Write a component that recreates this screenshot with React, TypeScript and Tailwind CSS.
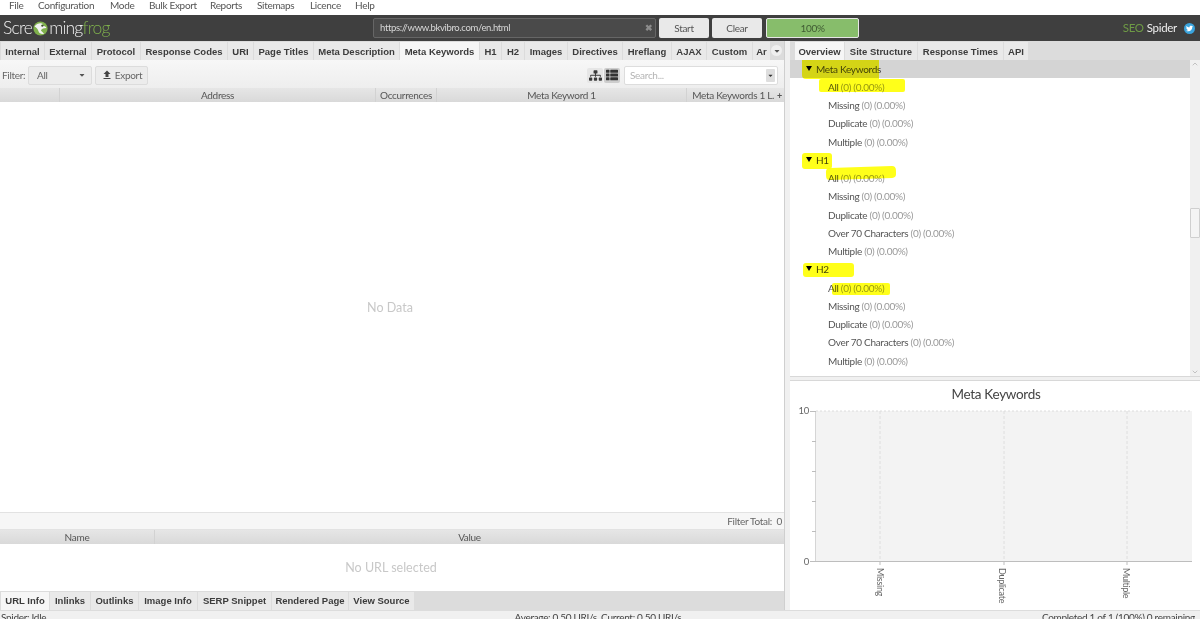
import { FaSitemap, FaThList, FaTwitter, FaCaretDown } from 'react-icons/fa';
import { MdFileUpload } from 'react-icons/md';
import { ChevronUp, ChevronDown } from 'lucide-react';

const menuItems = [
  { label: 'File', w: 'w-[29px]' },
  { label: 'Configuration', w: 'w-[72px]' },
  { label: 'Mode', w: 'w-[39px]' },
  { label: 'Bulk Export', w: 'w-[61px]' },
  { label: 'Reports', w: 'w-[47px]' },
  { label: 'Sitemaps', w: 'w-[53px]' },
  { label: 'Licence', w: 'w-[45px]' },
  { label: 'Help', w: 'w-[30px]' },
];

const mainTabs = [
  { label: 'Internal', w: 'w-[43px]' },
  { label: 'External', w: 'w-[46px]' },
  { label: 'Protocol', w: 'w-[48px]' },
  { label: 'Response Codes', w: 'w-[86px]' },
  { label: 'URI', w: 'w-[25px]' },
  { label: 'Page Titles', w: 'w-[59px]' },
  { label: 'Meta Description', w: 'w-[85px]' },
  { label: 'Meta Keywords', w: 'w-[79px]', active: true },
  { label: 'H1', w: 'w-[21px]' },
  { label: 'H2', w: 'w-[22px]' },
  { label: 'Images', w: 'w-[42px]' },
  { label: 'Directives', w: 'w-[54px]' },
  { label: 'Hreflang', w: 'w-[48px]' },
  { label: 'AJAX', w: 'w-[34px]' },
  { label: 'Custom', w: 'w-[45px]' },
];

const rightTabs = [
  { label: 'Overview', w: 'w-[49px]', active: true },
  { label: 'Site Structure', w: 'w-[72px]' },
  { label: 'Response Times', w: 'w-[85px]' },
  { label: 'API', w: 'w-[24px]' },
];

const bottomTabs = [
  { label: 'URL Info', w: 'w-[48px]', active: true },
  { label: 'Inlinks', w: 'w-[40px]' },
  { label: 'Outlinks', w: 'w-[47px]' },
  { label: 'Image Info', w: 'w-[58px]' },
  { label: 'SERP Snippet', w: 'w-[73px]' },
  { label: 'Rendered Page', w: 'w-[76px]' },
  { label: 'View Source', w: 'w-[65px]' },
];

const tree = [
  { group: 'Meta Keywords', selected: true, rows: ['All', 'Missing', 'Duplicate', 'Multiple'] },
  { group: 'H1', rows: ['All', 'Missing', 'Duplicate', 'Over 70 Characters', 'Multiple'] },
  { group: 'H2', rows: ['All', 'Missing', 'Duplicate', 'Over 70 Characters', 'Multiple'] },
];

type Tab = { label: string; w: string; active?: boolean };

const TabStrip = ({ tabs, inset = 'pl-px', bottom = false }: { tabs: Tab[]; inset?: string; bottom?: boolean }) => (
  <div className={`flex h-full gap-px ${inset} ${bottom ? 'items-start pt-px' : 'items-end'}`}>
    {tabs.map((t) => (
      <div
        key={t.label}
        className={`flex h-[18px] shrink-0 items-center justify-center whitespace-nowrap font-['Liberation_Sans',sans-serif] text-[9.5px] font-bold tracking-normal text-[#3c3c3c] ${t.w} ${
          bottom ? '' : 'pt-[2px]'
        } ${t.active ? 'bg-[#f6f6f6]' : 'bg-[#e9e9e9]'}`}
      >
        {t.label}
      </div>
    ))}
  </div>
);

const HeaderCell = ({ label, w }: { label: string; w: string }) => (
  <div className={`flex h-full shrink-0 items-center justify-center border-r border-[#d2d2d2] pt-[1px] text-[#555] ${w}`}>
    {label}
  </div>
);

const FrogMark = () => (
  <svg width="15" height="15" viewBox="0 0 19 19" className="mx-px shrink-0">
    <circle cx="9.5" cy="9.5" r="9" fill="#7fb04c" />
    <path d="M2 7c3-4 8-5 11-3-2 0-3 1-3 3 2-1 6-1 7 2-3 0-6 1-7 3 1 1 3 3 4 4-3 1-6 0-7-3-1-3-3-5-5-6z" fill="#f2f2f2" />
    <circle cx="12" cy="6" r="1.2" fill="#3f3f3f" />
  </svg>
);

const Chart = () => (
  <svg width="410" height="229" viewBox="0 0 410 229" className="block">
    <text x="206" y="18" textAnchor="middle" fontSize="13.5" fill="#444" fontFamily="Lato, sans-serif">
      Meta Keywords
    </text>
    <rect x="26" y="30" width="376" height="150" fill="#f3f3f3" />
    <line x1="26" y1="30" x2="402" y2="30" stroke="#dcdcdc" strokeDasharray="2 2" />
    {[90, 214, 337].map((x) => (
      <line key={x} x1={x} y1="30" x2={x} y2="180" stroke="#dedede" strokeDasharray="3 2" />
    ))}
    <line x1="20" y1="180.5" x2="402" y2="180.5" stroke="#bdbdbd" />
    <line x1="25.5" y1="30" x2="25.5" y2="180" stroke="#d5d5d5" />
    {[30, 60, 90, 120, 150].map((y) => (
      <line key={y} x1={y === 30 ? 20 : 22} y1={y + 0.5} x2="26" y2={y + 0.5} stroke="#bdbdbd" />
    ))}
    {[90, 214, 337].map((x) => (
      <line key={x} x1={x} y1="180" x2={x} y2="184" stroke="#bdbdbd" />
    ))}
    <text x="19" y="33" textAnchor="end" fontSize="9.5" fill="#666" fontFamily="Lato, sans-serif">10</text>
    <text x="19" y="184" textAnchor="end" fontSize="9.5" fill="#666" fontFamily="Lato, sans-serif">0</text>
    {[
      { x: 90, label: 'Missing' },
      { x: 212, label: 'Duplicate' },
      { x: 336, label: 'Multiple' },
    ].map((t) => (
      <text
        key={t.label}
        x="0"
        y="0"
        transform={`translate(${t.x - 3} 187) rotate(90)`}
        fontSize="9"
        fill="#666"
        fontFamily="Lato, sans-serif"
      >
        {t.label}
      </text>
    ))}
  </svg>
);

export default function App() {
  return (
    <div className="flex h-[619px] w-[1200px] flex-col overflow-hidden bg-white font-['Lato',sans-serif] text-[10px] tracking-[-0.3px] text-[#444]">
      {/* menu */}
      <div className="flex h-[15px] shrink-0 items-center pb-[4px] pl-[9px] text-[#555]">
        {menuItems.map((m) => (
          <div key={m.label} className={`whitespace-nowrap ${m.w}`}>
            {m.label}
          </div>
        ))}
      </div>

      {/* dark toolbar */}
      <div className="relative flex h-[26px] shrink-0 items-center bg-[#3f3f3f] pl-[3px]">
        <div className="flex w-[370px] items-center text-[17.5px] font-light tracking-[-0.8px] text-[#f0f0f0]">
          <span>Scre</span>
          <FrogMark />
          <span>ming</span>
          <span className="text-[#7fb04c]">frog</span>
        </div>
        <div className="flex h-[20px] w-[283px] items-center justify-between rounded-[2px] border border-[#666] bg-[#4a4a4a] pl-[6px] pr-[2px] text-[9.5px] tracking-[-0.35px] text-[#d8d8d8]">
          <span>https://www.bkvibro.com/en.html</span>
          <span className="text-[9px] font-bold text-[#8d8d8d]">✖</span>
        </div>
        <div className="ml-[3px] flex h-[20px] w-[50px] items-center justify-center rounded-[2px] bg-[#e9e9e9] text-[#555]">
          Start
        </div>
        <div className="ml-[3px] flex h-[20px] w-[50px] items-center justify-center rounded-[2px] bg-[#e9e9e9] text-[#555]">
          Clear
        </div>
        <div className="ml-[4px] flex h-[20px] w-[93px] items-center justify-center rounded-[2px] border border-[#e6e6e6] bg-[#87bd6b] text-[#3f5a33]">
          100%
        </div>
        <div className="ml-auto flex items-center pr-[5px] text-[11.5px]">
          <span className="text-[#6e9a45]">SEO</span>
          <span className="ml-[3px] text-[#eeeeee]">Spider</span>
          <span className="ml-[7px] flex h-[11px] w-[11px] items-center justify-center rounded-full bg-[#3aa3dc] text-white">
            <FaTwitter size={7} />
          </span>
        </div>
      </div>

      {/* panes */}
      <div className="flex min-h-0 flex-1">
        {/* left pane */}
        <div className="flex w-[785px] shrink-0 flex-col border-r border-[#cfcfcf]">
          <div className="flex h-[19px] shrink-0 items-center justify-between bg-[#dcdcdc]">
            <TabStrip tabs={mainTabs} />
            <div className="flex h-full items-center pr-[2px]">
              <span className="flex h-[18px] w-[17px] items-center justify-center self-end bg-[#e9e9e9] pt-[2px] font-['Liberation_Sans',sans-serif] text-[9.5px] font-bold tracking-normal text-[#3c3c3c]">
                Ar
              </span>
              <span className="ml-[1px] flex h-[11px] w-[11px] items-center justify-center rounded-full bg-[#efefef] text-[#555]">
                <FaCaretDown size={8} />
              </span>
            </div>
          </div>

          <div className="flex h-[28px] shrink-0 items-center bg-gradient-to-b from-[#f7f7f7] to-[#eeeeee] pl-[2px] pr-[6px] pt-[2px] text-[#666]">
            <span className="w-[26px]">Filter:</span>
            <div className="flex h-[19px] w-[64px] items-center justify-between rounded-[2px] border border-[#dcdcdc] bg-[#ececec] pl-[8px] pr-[5px]">
              <span>All</span>
              <FaCaretDown size={8} className="text-[#555]" />
            </div>
            <div className="ml-[3px] flex h-[19px] w-[53px] items-center justify-center gap-[2px] rounded-[2px] border border-[#dcdcdc] bg-[#ececec]">
              <MdFileUpload size={12} className="text-[#444]" />
              <span>Export</span>
            </div>
            <div className="ml-auto flex items-center">
              <div className="flex h-[15px] w-[16px] items-center justify-center rounded-[2px] bg-[#e6e6e6]">
                <FaSitemap size={13} className="text-[#3a3a3a]" />
              </div>
              <div className="ml-px flex h-[15px] w-[16px] items-center justify-center rounded-[2px] bg-[#cdcdcd]">
                <FaThList size={12} className="text-[#333]" />
              </div>
              <div className="ml-[4px] flex h-[19px] w-[154px] items-center justify-between rounded-[2px] border border-[#dddddd] bg-white pl-[5px] pr-[2px]">
                <span className="text-[#b4b4b4]">Search...</span>
                <span className="flex h-[13px] w-[9px] items-center justify-center rounded-[1px] bg-[#dedede] text-[#333]">
                  <FaCaretDown size={7} />
                </span>
              </div>
            </div>
          </div>

          <div className="flex h-[14px] shrink-0 bg-gradient-to-b from-[#e6e6e6] to-[#d9d9d9]">
            <HeaderCell label="" w="w-[60px]" />
            <HeaderCell label="Address" w="w-[316px]" />
            <HeaderCell label="Occurrences" w="w-[61px]" />
            <HeaderCell label="Meta Keyword 1" w="w-[250px]" />
            <div className="flex h-full flex-1 items-center justify-end pr-[2px] pt-[1px] text-[#555]">
              <span className="whitespace-nowrap">Meta Keywords 1 L.</span>
              <span className="ml-[3px] text-[9px] font-bold">+</span>
            </div>
          </div>

          <div className="flex min-h-0 flex-1 items-center justify-center pr-[4px] pt-[2px] text-[12.5px] tracking-normal text-[#c8c8c8]">
            No Data
          </div>

          <div className="flex h-[18px] shrink-0 items-center justify-end border-y border-[#e2e2e2] bg-[#f6f6f6] pr-[2px] text-[#666]">
            Filter Total:&nbsp;&nbsp;0
          </div>

          <div className="flex h-[14px] shrink-0 bg-gradient-to-b from-[#e6e6e6] to-[#d9d9d9]">
            <HeaderCell label="Name" w="w-[155px]" />
            <div className="flex h-full flex-1 items-center justify-center pt-[1px] text-[#555]">Value</div>
          </div>

          <div className="flex h-[47px] shrink-0 items-center justify-center pr-[2px] pt-[2px] text-[12.5px] tracking-normal text-[#c8c8c8]">
            No URL selected
          </div>

          <div className="h-[19px] shrink-0 bg-[#dcdcdc]">
            <TabStrip tabs={bottomTabs} bottom />
          </div>
        </div>

        {/* splitter */}
        <div className="w-[5px] shrink-0 bg-[#f0f0f0]" />

        {/* right pane */}
        <div className="flex min-w-0 flex-1 flex-col">
          <div className="h-[19px] shrink-0 bg-[#dcdcdc]">
            <TabStrip tabs={rightTabs} inset="pl-[5px]" />
          </div>

          <div className="flex h-[316px] shrink-0">
            <div className="relative min-w-0 flex-1 overflow-hidden">
              {tree.map((section) => (
                <div key={section.group}>
                  <div
                    className={`flex h-[18.25px] items-center pl-[16px] text-[#444] ${
                      section.selected ? 'bg-[#d4d4d4]' : ''
                    }`}
                  >
                    <span className="mb-[2px] mr-[4px] h-0 w-0 border-x-[3.5px] border-t-[5px] border-x-transparent border-t-black" />
                    {section.group}
                  </div>
                  {section.rows.map((row) => (
                    <div key={row} className="flex h-[18.25px] items-center whitespace-pre pl-[38px]">
                      <span className="text-[#555]">{row}</span>
                      <span className="text-[#999]"> (0) (0.00%)</span>
                    </div>
                  ))}
                </div>
              ))}

              {/* marker strokes drawn over the tree */}
              <div className="absolute left-[12px] top-0 h-[19px] w-[77px] rounded-bl-[4px] bg-[#ffff1a] mix-blend-multiply" />
              <div className="absolute left-[29px] top-[19px] h-[13px] w-[86px] rounded-[2px] bg-[#ffff1a] mix-blend-multiply" />
              <div className="absolute left-[12px] top-[93px] h-[16px] w-[30px] rounded-[3px] bg-[#ffff1a] mix-blend-multiply" />
              <div className="absolute left-[36px] top-[107px] h-[12px] w-[70px] -rotate-2 rounded-[4px] bg-[#ffff1a] mix-blend-multiply" />
              <div className="absolute left-[13px] top-[203px] h-[14px] w-[51px] rounded-[3px] bg-[#ffff1a] mix-blend-multiply" />
              <div className="absolute left-[42px] top-[223px] h-[12px] w-[58px] rounded-[2px] bg-[#ffff1a] mix-blend-multiply" />
            </div>
            <div className="flex w-[10px] shrink-0 flex-col items-center bg-[#f0f0f0] text-[#aaa]">
              <ChevronUp size={8} />
              <div className="mb-[130px] mt-[140px] w-full flex-1 rounded-[1px] border border-[#cfcfcf] bg-[#f4f4f4]" />
              <ChevronDown size={8} />
            </div>
          </div>

          <div className="h-[5px] shrink-0 border-y border-[#d8d8d8] bg-[#f0f0f0]" />

          <div className="flex-1 overflow-hidden">
            <Chart />
          </div>
        </div>
      </div>

      {/* status bar */}
      <div className="flex h-[9px] shrink-0 items-start justify-between overflow-visible border-t border-[#dcdcdc] bg-[#f0f0f0] leading-[12px] text-[#444]">
        <span className="w-[400px] pl-px">Spider: Idle</span>
        <span className="w-[280px] pr-[2px] text-center">Average: 0.50 URI/s. Current: 0.50 URI/s.</span>
        <span className="w-[400px] pr-[5px] text-right">Completed 1 of 1 (100%) 0 remaining</span>
      </div>
    </div>
  );
}
